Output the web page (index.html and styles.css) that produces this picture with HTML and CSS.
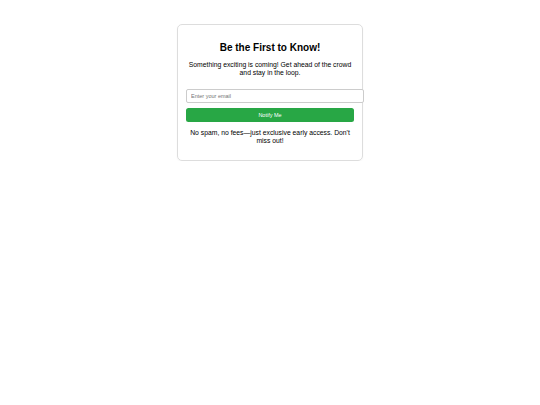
FILE: index.html
```html
<!DOCTYPE html>
<html>
<head>
<meta charset="utf-8">
<link rel="stylesheet" href="styles.css">
</head>
<body>
<div class="card">
  <h2 class="title">Be the First to Know!</h2>
  <p class="lead">Something exciting is coming! Get ahead of the crowd and stay in the loop.</p>
  <form class="form">
    <input class="email" type="email" placeholder="Enter your email">
    <button class="btn" type="button">Notify Me</button>
  </form>
  <p class="note">No spam, no fees—just exclusive early access. Don't miss out!</p>
</div>
</body>
</html>
```
FILE: styles.css
```css
html, body {
  margin: 0;
  padding: 0;
  background: #fff;
}
body {
  font-family: "Liberation Sans", Arial, sans-serif;
  padding-top: 24px;
}
.card {
  width: 168px;
  margin: 0 auto;
  padding: 0 8px;
  border: 1px solid #ddd;
  border-radius: 5px;
  text-align: center;
  box-shadow: 0 1px 2px rgba(0,0,0,0.04);
}
.title {
  font-size: 10px;
  font-weight: bold;
  margin: 17px 0 7.5px;
  line-height: 11.5px;
  color: #000;
}
.lead {
  font-size: 6.8px;
  line-height: 8px;
  margin: 0 0 6.5px;
  color: #000;
}
.form {
  margin: 0;
  padding-top: 5px;
}
.email {
  display: block;
  width: 100%;
  margin: 0 0 5px;
  padding: 3.5px 4px;
  border: 1px solid #ccc;
  border-radius: 2px;
  font-family: "Liberation Sans", Arial, sans-serif;
  font-size: 5.5px;
  line-height: 5px;
  height: 5px;
  color: #333;
  outline: none;
}
.email::placeholder {
  color: #757575;
}
.btn {
  display: block;
  width: 100%;
  height: 14px;
  padding: 0;
  border: none;
  border-radius: 2.5px;
  background: #28a745;
  color: #fff;
  font-family: "Liberation Sans", Arial, sans-serif;
  font-size: 5.5px;
  line-height: 14px;
}
.note {
  font-size: 6.8px;
  line-height: 8px;
  margin: 7px 0 15px;
  color: #000;
}
```
